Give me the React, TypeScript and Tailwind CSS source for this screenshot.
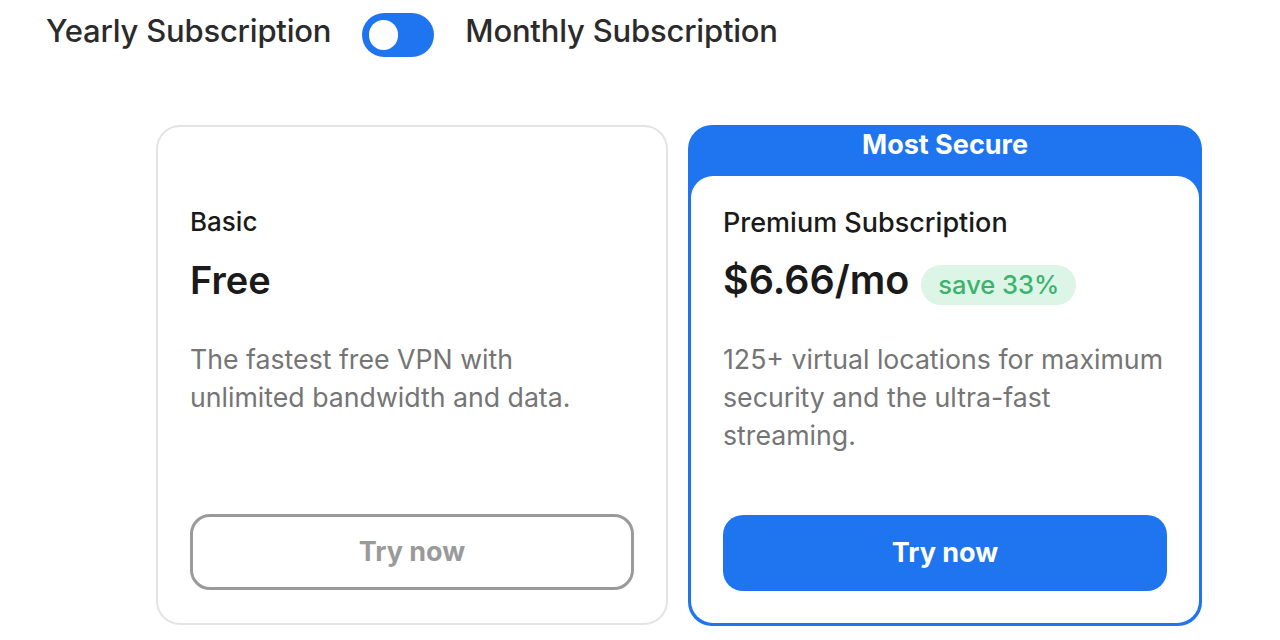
import React, { useState } from "react";

const font = { fontFamily: "Inter, 'Noto Sans', sans-serif" };

function Toggle({ on, onChange }: { on: boolean; onChange: () => void }) {
    return (
        <button
            onClick={onChange}
            className="flex h-[44px] w-[72px] items-center rounded-full bg-[#1f75f0] px-[7px]"
        >
            <span
                className={
                    "block h-[30px] w-[29px] rounded-full bg-white transition-transform " +
                    (on ? "translate-x-[29px]" : "translate-x-0")
                }
            />
        </button>
    );
}

export default function App() {
    const [monthly, setMonthly] = useState(false);

    return (
        <div className="min-h-[640px] bg-white text-[#1a1a1a]" style={font}>
            {/* billing toggle */}
            <div className="flex h-[44px] items-center gap-[31px] pl-[46px] mt-[13px]">
                <span className="pb-[8px] text-[31px] font-medium leading-[36px] tracking-[-0.2px] text-[#2b2b2b]">Yearly Subscription</span>
                <Toggle on={monthly} onChange={() => setMonthly(!monthly)} />
                <span className="pb-[8px] text-[31px] font-medium leading-[36px] tracking-[-0.2px] text-[#2b2b2b]">Monthly Subscription</span>
            </div>

            <div className="mt-[68px] flex gap-[20px] pl-[156px]">
                {/* basic plan */}
                <div className="flex h-[500px] w-[512px] flex-col rounded-[24px] border-2 border-[#e4e4e4] px-[32px] pb-[33px] pt-[78px]">
                    <div className="text-[26px] font-medium leading-[34px]">Basic</div>
                    <div className="mt-[20px] text-[38px] font-semibold leading-[42px]">Free</div>
                    <p className="mt-[39px] pr-[4px] text-[26.7px] leading-[38px] text-[#757575]">
                        The fastest free VPN with unlimited bandwidth and data.
                    </p>
                    <button className="mt-auto h-[76px] w-full rounded-[20px] border-[3px] border-[#9a9a9a] text-[27px] font-bold text-[#9a9a9a]">
                        Try now
                    </button>
                </div>

                {/* premium plan */}
                <div className="flex h-[501px] w-[514px] flex-col rounded-[24px] bg-[#1f75f0] p-[3px] pt-0">
                    <div className="flex h-[51px] items-center justify-center pb-[10px] text-[27px] font-bold text-white">
                        Most Secure
                    </div>
                    <div className="flex flex-1 flex-col rounded-[22px] bg-white px-[32px] pb-[32px] pt-[30px]">
                        <div className="text-[27px] font-medium leading-[34px]">Premium Subscription</div>
                        <div className="mt-[19px] flex h-[42px] items-center gap-[12px]">
                            <span className="text-[39.5px] font-semibold leading-[42px]">$6.66/mo</span>
                            <span className="mt-[10px] rounded-full bg-[#dcf5e6] px-[17px] py-[1px] text-[25.5px] font-medium text-[#3bb36e]">
                                save 33%
                            </span>
                        </div>
                        <p className="mt-[39px] pr-[4px] text-[26.7px] leading-[38px] text-[#757575]">
                            125+ virtual locations for maximum security and the ultra-fast streaming.
                        </p>
                        <button className="mt-auto h-[76px] w-full rounded-[20px] bg-[#1f75f0] text-[27px] font-bold text-white">
                            Try now
                        </button>
                    </div>
                </div>
            </div>
        </div>
    );
}
